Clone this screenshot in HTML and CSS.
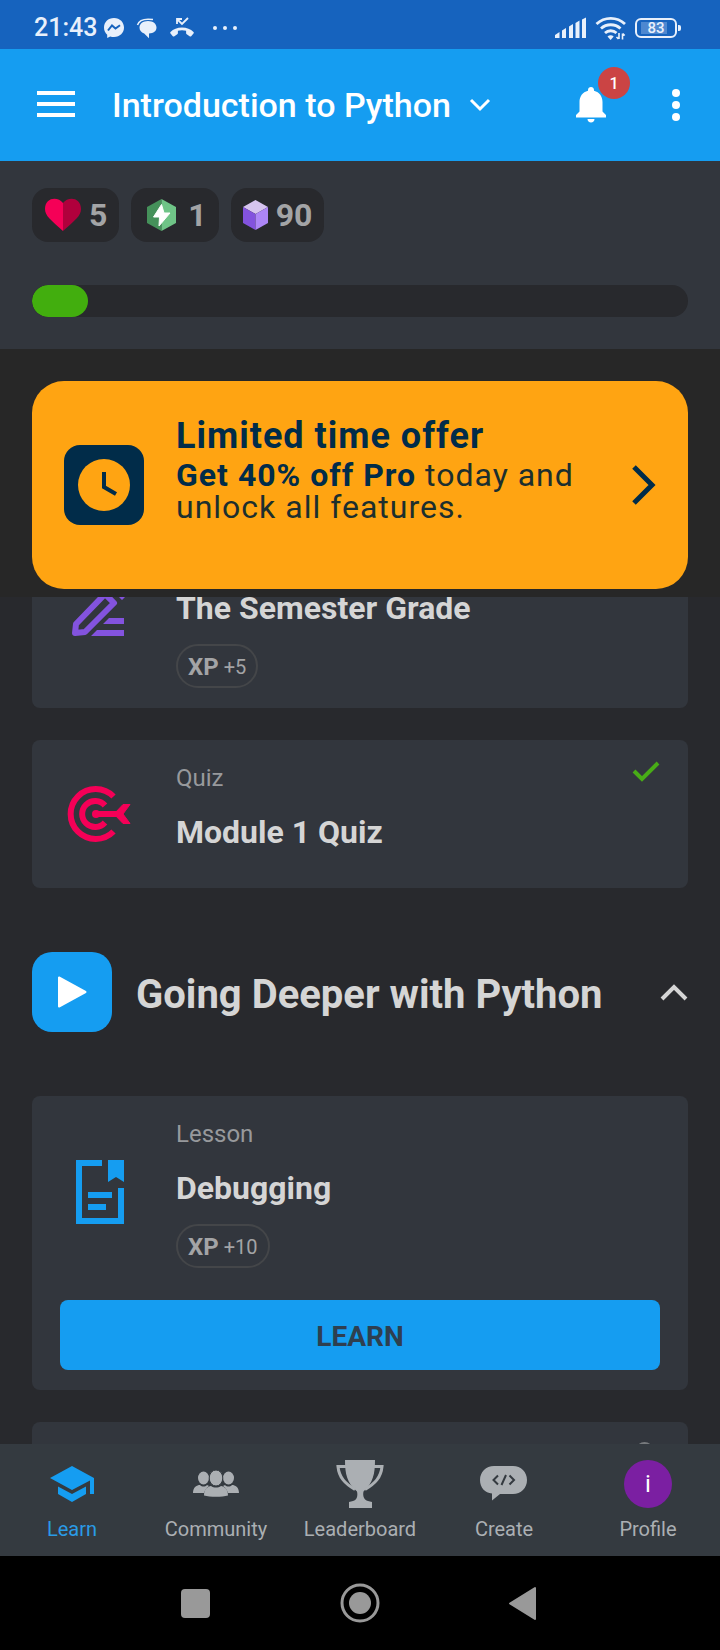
FILE: index.html
```html
<!DOCTYPE html>
<html lang="en">
<head>
<meta charset="utf-8">
<meta name="viewport" content="width=device-width, initial-scale=1">
<title>Introduction to Python</title>
<link rel="stylesheet" href="styles.css">
</head>
<body>
<div class="app">
  <div class="status">
    <span class="status-time">21:43</span>
    <svg class="status-icon" width="22" height="22" viewBox="0 0 22 22"><path fill="#e8f0fb" d="M11 1C5 1 1 5.200 1 10.600c0 3 1.200 5.400 3.200 7.100V21l3-1.600c1.200.4 2.400.6 3.800.6 6 0 10-4.200 10-9.400S17 1 11 1z"/><path d="M5 13.500l4-5 3.500 3 4.500-3.300" fill="none" stroke="#1663be" stroke-width="2"/></svg>
    <svg class="status-icon" width="22" height="22" viewBox="0 0 22 22"><path fill="#e8f0fb" d="M12 4c5 0 8.500 2.800 8.500 6.600 0 3.700-3 5.700-7.500 5.900v4.800l-4.800-4.800C5 15.500 3.500 13.300 3.500 10.600 3.500 6.800 7 4 12 4z"/><path d="M1.500 8C3 3.500 8 1.300 17 2.600" fill="none" stroke="#e8f0fb" stroke-width="1.500"/></svg>
    <svg class="status-icon" width="26" height="22" viewBox="0 0 26 22"><path fill="#e8f0fb" d="M13 10.500c4.700 0 8.700 1.700 11.500 4.500.5.500.5 1.100 0 1.600l-2.300 2.600c-.5.500-1.100.5-1.600.1l-2.900-2.100c-.5-.3-.6-.7-.6-1.200v-2.200c-2.600-.8-5.600-.8-8.200 0V16c0 .5-.1.900-.6 1.200l-2.900 2.100c-.5.400-1.100.4-1.600-.1l-2.300-2.600c-.5-.5-.5-1.100 0-1.600 2.800-2.800 6.800-4.500 11.500-4.500z"/><path d="M8 7V2h5M8 2l5 5 6-6" fill="none" stroke="#e8f0fb" stroke-width="1.800"/></svg>
    <svg class="status-more" width="26" height="22" viewBox="0 0 26 22" fill="#e8f0fb"><circle cx="3" cy="11" r="2"/><circle cx="13" cy="11" r="2"/><circle cx="23" cy="11" r="2"/></svg>
    <span class="status-gap"></span>
    <svg width="32" height="24" viewBox="0 0 32 24" fill="#e8f0fb"><path d="M0 19l4.500-3v6H0zM7 14.500l4-2.500v10H7zM14 10.500L18 8v14h-4zM20.500 7l4-2.500V22h-4zM27 3.500L31 1.500V22h-4z"/></svg>
    <svg width="32" height="24" viewBox="0 0 32 24"><g fill="none" stroke="#e8f0fb" stroke-width="2.800"><path d="M1.500 8C9.500.5 22 .5 30 8"/><path d="M6 12.500c5.500-5 14-5 19.500 0"/><path d="M10 17c3.200-3 8.300-3 11.500 0"/></g><path fill="#e8f0fb" d="M12.500 20.500c1.800-1.600 4.400-1.600 6.200 0L15.600 24z"/><path d="M24 17v6M21.500 21l2 2M27.500 23.500v-6M29.700 19.500l-2-2" fill="none" stroke="#e8f0fb" stroke-width="1.600"/></svg>
    <span class="battery"><span class="battery-level">83</span></span>
  </div>

  <header class="bar">
    <button class="icon-btn" aria-label="Menu"><svg width="40" height="28" viewBox="0 0 40 28" fill="#fff"><rect x="1" width="38" height="4"/><rect x="1" y="11" width="38" height="4"/><rect x="1" y="22" width="38" height="4"/></svg></button>
    <button class="course">Introduction to Python
      <svg width="22" height="14" viewBox="0 0 22 14"><path d="M2 2l9 9 9-9" fill="none" stroke="#fff" stroke-width="3"/></svg>
    </button>
    <button class="icon-btn bell" aria-label="Notifications">
      <svg width="32" height="36" viewBox="0 0 32 36"><path fill="#fff" d="M16 0c1.700 0 3 1.300 3 3v.7C24.500 5 27.500 9.500 27.500 15v9.500L31 28v2.500H1V28l3.500-3.500V15C4.500 9.500 7.500 5 13 3.700V3c0-1.700 1.300-3 3-3zM12.500 32h7c0 2-1.500 3.500-3.500 3.500S12.500 34 12.500 32z"/></svg>
      <span class="badge">1</span>
    </button>
    <button class="icon-btn" aria-label="More options"><svg width="10" height="32" viewBox="0 0 10 32" fill="#fff"><circle cx="5" cy="4" r="4"/><circle cx="5" cy="16" r="4"/><circle cx="5" cy="28" r="4"/></svg></button>
  </header>

  <section class="stats">
    <div class="pills">
      <span class="pill"><svg width="40" height="36" viewBox="0 0 40 36"><path fill="#f50057" d="M21 6C16-1 3 0 3 12c0 7 6 11 18 22z"/><path fill="#b0003c" d="M21 6C26-1 39 0 39 12c0 7-6 11-18 22z"/></svg>5</span>
      <span class="pill"><svg width="40" height="36" viewBox="0 0 40 36"><path fill="#45915a" d="M20.500 2L6 10v16l14.500 8z"/><path fill="#6fc487" d="M20.500 2L35 10v16l-14.500 8z"/><path fill="#fff" stroke="#fff" stroke-linejoin="round" d="M20.500 7.500l-8 12.500h6l-.5 9L29 16h-6z"/></svg>1</span>
      <span class="pill"><svg width="28" height="36" viewBox="0 0 28 36"><path fill="#d6c4ef" d="M14.500 3L27 10l-12.500 7L2 10z"/><path fill="#8353de" d="M2 10l12.500 7v16L2 26z"/><path fill="#ad86f7" d="M27 10l-12.500 7v16L27 26z"/></svg>90</span>
    </div>
    <div class="progress" role="progressbar" aria-label="Course progress"><div class="progress-done" style="width: 8.5%"></div></div>
  </section>

  <section class="offer-wrap">
    <a class="offer" href="#pro">
      <span class="offer-icon"><svg width="52" height="52" viewBox="0 0 52 52"><circle cx="26" cy="26" r="26" fill="#ffa412"/><path d="M26 13v15l12 7" fill="none" stroke="#012c49" stroke-width="4"/></svg></span>
      <span class="offer-text"><strong class="offer-title">Limited time offer</strong><span class="offer-body"><b>Get 40% off Pro</b> today and unlock all features.</span></span>
      <svg width="24" height="40" viewBox="0 0 24 40"><path d="M2 2l18 18L2 38" fill="none" stroke="#012c49" stroke-width="5"/></svg>
    </a>
  </section>

  <main class="feed">
    <div class="feed-list">
      <article class="card">
        <div class="card-row">
          <svg class="card-icon" width="80" height="80" viewBox="0 0 80 80"><path d="M15 61l1-9 29-30 9 9-29 29z" fill="none" stroke="#8353de" stroke-width="6" stroke-linejoin="round"/><path fill="#8353de" d="M50 16l6-6 12 12-6 6zM49 46h15v6H43zM37 58h27v6H31z"/></svg>
          <div class="card-text"><p class="kind">Practice</p><h3 class="name">The Semester Grade</h3><span class="xp"><b>XP</b>+5</span></div>
        </div>
      </article>
      <article class="card">
        <div class="card-row">
          <svg class="card-icon" width="80" height="80" viewBox="0 0 80 80"><g fill="none" stroke="#f50057" stroke-width="6"><path d="M53.500 22.500a25 25 0 1 0 0 35"/><path d="M45 31.500a13 13 0 1 0 0 17"/><path d="M36 40h22"/></g><circle cx="36" cy="40" r="4" fill="#f50057"/><path fill="#f50057" stroke="#f50057" stroke-linejoin="round" d="M54 40l9-9.500h7L63 40l7 9.500h-7z"/></svg>
          <div class="card-text"><p class="kind">Quiz</p><h3 class="name">Module 1 Quiz</h3></div>
          <svg class="card-state" width="28" height="22" viewBox="0 0 28 22"><path d="M2 11l8 8L26 3" fill="none" stroke="#48ac17" stroke-width="4"/></svg>
        </div>
      </article>

      <button class="module" aria-expanded="true">
        <span class="module-icon"><svg width="30" height="32" viewBox="0 0 30 32"><path fill="#fff" stroke="#fff" stroke-width="2" stroke-linejoin="round" d="M2 1.500v29L28.500 16z"/></svg></span>
        <span class="module-name">Going Deeper with Python</span>
        <svg width="28" height="18" viewBox="0 0 28 18"><path d="M2 16L14 4l12 12" fill="none" stroke="#d5d5d5" stroke-width="4"/></svg>
      </button>

      <article class="card">
        <div class="card-row">
          <svg class="card-icon" width="80" height="80" viewBox="0 0 80 80"><path d="M42 11H19v58h42V36" fill="none" stroke="#159df1" stroke-width="6"/><path fill="#159df1" d="M48 8h16v22l-8-5-8 5zM28 40h24v6H28zM28 52h18v6H28z"/></svg>
          <div class="card-text"><p class="kind">Lesson</p><h3 class="name">Debugging</h3><span class="xp"><b>XP</b>+10</span></div>
        </div>
        <button class="learn">LEARN</button>
      </article>
      <article class="card">
        <div class="card-row">
          <svg class="card-icon" width="80" height="80" viewBox="0 0 80 80"></svg>
          <div class="card-text"></div>
          <svg class="card-state" width="28" height="32" viewBox="0 0 28 32"><path d="M5 13V9a7.500 7.500 0 0 1 15 0v4" fill="none" stroke="#777a7d" stroke-width="3"/><rect x="2" y="12" width="21" height="16" rx="2" fill="#777a7d"/></svg>
        </div>
      </article>
    </div>
  </main>

  <nav class="tabs">
    <a class="tab tab-on" href="#learn"><svg width="48" height="48" viewBox="0 0 48 48" fill="#159df1"><path d="M24 6l22 12v16h-4V20.500L24 30 2 18z"/><path d="M10 26.500l14 7.500 14-7.500V34l-14 8-14-8z"/></svg>Learn</a>
    <a class="tab" href="#community"><svg width="48" height="48" viewBox="0 0 48 48" fill="#abafb3"><ellipse cx="11.500" cy="18" rx="5.500" ry="6.500"/><ellipse cx="36.500" cy="18" rx="5.500" ry="6.500"/><path d="M1 33c0-6 4-8 7-8 2 2 5 2 7 0l2 1c-3 2-4 4-5 7zM47 33c0-6-4-8-7-8-2 2-5 2-7 0l-2 1c3 2 4 4 5 7z"/><ellipse cx="24" cy="18" rx="6.800" ry="8" stroke="#343a40"/><path d="M12 35.500c0-7 4-9 7-9.500 3 2 7 2 10 0 3 .5 7 2.500 7 9.500-6 1.800-18 1.800-24 0z"/></svg>Community</a>
    <a class="tab" href="#leaderboard"><svg width="48" height="48" viewBox="0 0 48 48"><path fill="#abafb3" d="M9 0h30c0 14-2 23-11.500 31.500-1 4 .5 9 4.500 9.500l4 1v6H13v-6l4-1c4-.5 5-5.500 4-9.500C11 23 9 14 9 0z"/><g fill="none" stroke="#abafb3" stroke-width="3"><path d="M10 6.500H2c1 11 7 17 17 23"/><path d="M38 6.500h8c-1 11-7 17-17 23"/></g></svg>Leaderboard</a>
    <a class="tab" href="#create"><svg width="48" height="48" viewBox="0 0 48 48"><path fill="#abafb3" d="M14 6h19c8 0 14 6 14 14s-6 14-14 14H20l-8 6.500v-7C5 33 0 27.500 0 20 0 12 6 6 14 6z"/><path d="M18 15.500L13.500 20l4.500 4.500M29.500 15.500L34 20l-4.500 4.500M26 15l-4.500 10" fill="none" stroke="#343a40" stroke-width="2"/></svg>Create</a>
    <a class="tab" href="#profile"><span class="avatar">i</span>Profile</a>
  </nav>

  <div class="system">
    <button class="system-btn" aria-label="Recent apps"><svg width="40" height="40" viewBox="0 0 40 40"><rect x="5" y="6" width="29" height="29" rx="4" fill="#999"/></svg></button>
    <button class="system-btn" aria-label="Home"><svg width="40" height="40" viewBox="0 0 40 40"><circle cx="20" cy="20" r="18" fill="none" stroke="#999" stroke-width="3"/><circle cx="20" cy="20" r="11" fill="#999"/></svg></button>
    <button class="system-btn" aria-label="Back"><svg width="40" height="40" viewBox="0 0 40 40"><path d="M31 5v31L6 20.500z" fill="#999" stroke="#999" stroke-width="2" stroke-linejoin="round"/></svg></button>
  </div>
</div>
</body>
</html>
```
FILE: styles.css
```css
* { box-sizing: border-box; }
body { margin: 0; background: #28292d; color: #d5d5d5; font-family: Roboto, "Liberation Sans", sans-serif; }
p, h3 { margin: 0; }
button { border: 0; padding: 0; background: none; color: inherit; font: inherit; cursor: pointer; }
a { color: inherit; text-decoration: none; }
svg { display: block; flex: none; }

.app { display: flex; flex-direction: column; height: 100vh; }

.status { display: flex; align-items: center; gap: 8px; padding: 6px 39px 0 34px; min-height: 49px; background: #1663be; color: #e8f0fb; }
.status-time { font-size: 25px; line-height: 32px; font-weight: 500; margin-right: -2px; }
.status-icon { margin-right: 3px; }
.status-more { margin-left: 6px; }
.status-gap { flex: 1; }
.battery { position: relative; width: 42px; height: 20px; margin-right: 4px; border: 2px solid #e8f0fb; border-radius: 6px; padding: 2px 8px 2px 4px; }
.battery::after { content: ""; position: absolute; right: -6px; top: 5px; width: 3px; height: 6px; background: #e8f0fb; border-radius: 0 2px 2px 0; }
.battery-level { display: flex; align-items: center; justify-content: center; height: 12px; background: #4d88d0; font-size: 15px; font-weight: 500; padding-left: 4px; }

.bar { display: flex; align-items: center; min-height: 112px; padding: 0 39px 0 36px; background: #159df1; color: #fff; }
.icon-btn { flex: none; }
.course { display: flex; align-items: center; gap: 18px; margin-left: 36px; margin-right: auto; font-size: 34px; font-weight: 500; line-height: 40px; white-space: nowrap; }
.bell { position: relative; margin-right: 64px; }
.badge { position: absolute; left: 23px; top: -20px; width: 32px; height: 32px; border-radius: 50%; background: #cb4444; font-size: 16px; font-weight: 500; line-height: 34px; text-align: center; }

.stats { padding: 27px 32px 32px; background: #32363d; }
.pills { display: flex; gap: 12px; }
.pill { display: flex; align-items: center; gap: 7px; height: 54px; padding: 0 12px 0 10px; border-radius: 16px; background: #28292d; color: #a3a4a6; font-size: 32px; font-weight: 700; }
.progress { margin-top: 43px; height: 32px; border-radius: 16px; background: #28292d; overflow: hidden; }
.progress-done { height: 100%; border-radius: 16px; background: #42ae0e; }

.offer-wrap { padding: 32px 32px 8px; background: #272727; }
.offer { display: flex; align-items: center; padding: 32px; border-radius: 32px; background: #ffa412; color: #012c49; }
.offer-icon { display: grid; place-items: center; flex: none; width: 80px; height: 80px; border-radius: 16px; background: #012c49; }
.offer-text { flex: 1; padding: 0 32px 34px 32px; }
.offer-title { display: block; font-size: 36px; line-height: 46px; letter-spacing: 1px; }
.offer-body { display: block; font-size: 32px; line-height: 32px; color: #1c2f2e; letter-spacing: 1px; }
.offer-body b { color: #012c49; }

.feed { flex: 1; min-height: 0; overflow: hidden; padding: 0 32px; }
.feed-list { display: flex; flex-direction: column; gap: 32px; margin-top: -81px; }
.card { border-radius: 8px; background: #32363d; }
.card-row { display: flex; align-items: center; padding: 0 28px; min-height: 148px; }
.card-text { flex: 1; margin-left: 36px; padding: 24px 0 20px; }
.kind { font-size: 24px; line-height: 28px; color: #97999c; }
.name { margin: 20px 0 16px; font-size: 32px; line-height: 40px; font-weight: 700; }
.xp { display: inline-flex; align-items: center; gap: 5px; height: 44px; padding: 2px 10px 0; border: 2px solid #444649; border-radius: 22px; vertical-align: top; font-size: 20px; color: #a3a4a6; }
.xp b { font-size: 24px; }
.card-state { align-self: flex-start; margin-top: 20px; }
.learn { display: block; width: calc(100% - 56px); height: 70px; margin: 12px 28px 20px; padding-top: 2px; border-radius: 8px; background: #159df1; color: #2e3f50; font-size: 28px; font-weight: 700; }

.module { display: flex; align-items: center; margin: 32px 0; text-align: left; }
.module-icon { display: grid; place-items: center; flex: none; width: 80px; height: 80px; border-radius: 20px; background: #159df1; }
.module-name { flex: 1; margin-left: 24px; padding-top: 5px; font-size: 40px; line-height: 48px; font-weight: 700; }

.tabs { display: grid; grid-template-columns: repeat(5, 1fr); background: #343a40; color: #abafb3; }
.tab { display: flex; flex-direction: column; align-items: center; gap: 8px; padding: 16px 0 14px; font-size: 20px; line-height: 26px; }
.tab-on { color: #2a9be6; }
.avatar { display: grid; place-items: center; width: 48px; height: 48px; border-radius: 50%; background: #7b1fa2; color: #fff; font-size: 24px; }

.system { display: flex; align-items: center; justify-content: center; gap: 124px; min-height: 94px; background: #000; }
```
